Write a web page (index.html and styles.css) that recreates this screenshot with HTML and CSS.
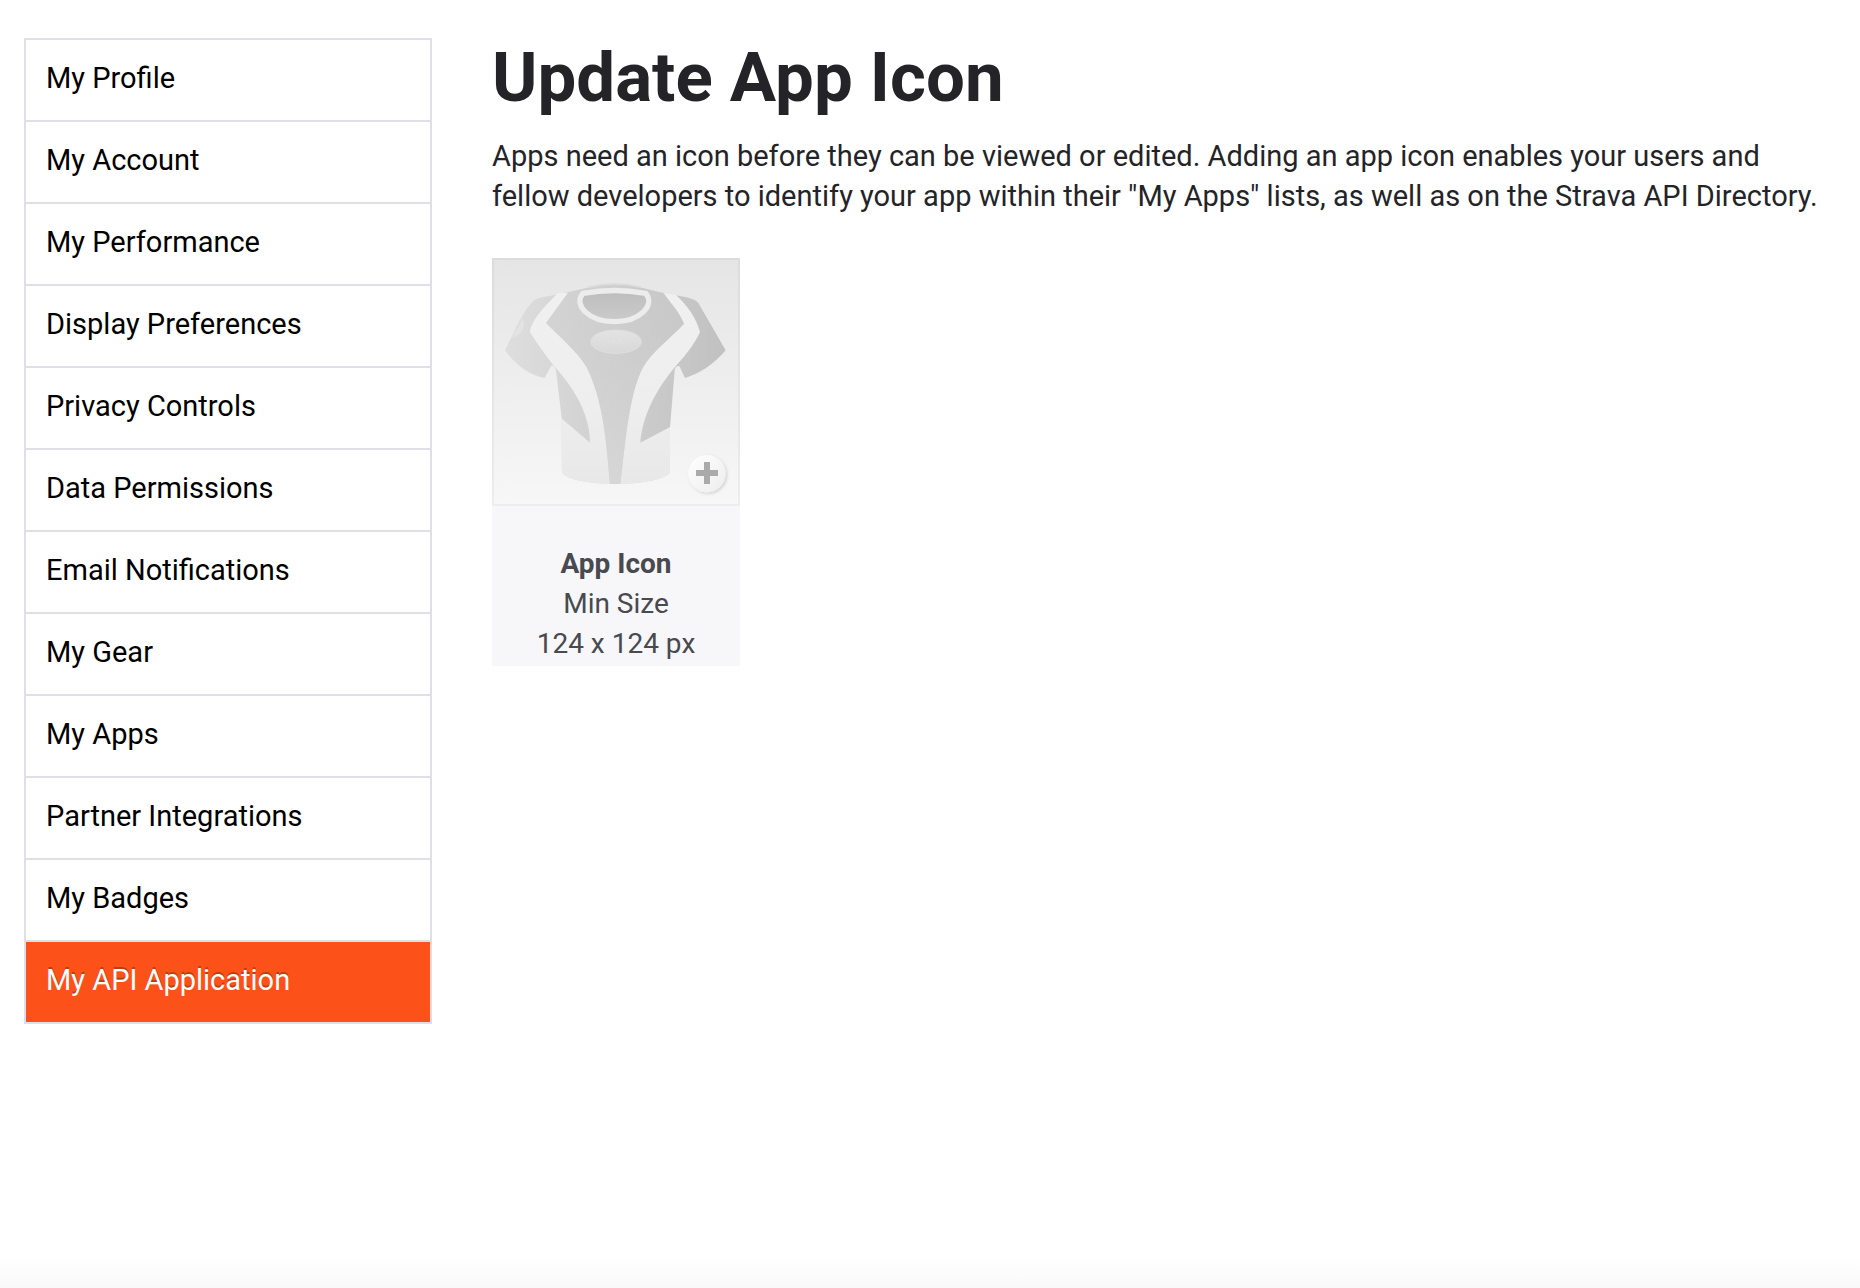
FILE: index.html
```html
<!DOCTYPE html>
<html lang="en">
<head>
<meta charset="utf-8">
<meta name="viewport" content="width=device-width, initial-scale=1">
<title>Update App Icon</title>
<link rel="stylesheet" href="styles.css">
</head>
<body>
<div class="page">
  <nav class="side-nav" aria-label="Settings">
    <ul class="side-list">
      <li><a href="#profile">My Profile</a></li>
      <li><a href="#account">My Account</a></li>
      <li><a href="#performance">My Performance</a></li>
      <li><a href="#display">Display Preferences</a></li>
      <li><a href="#privacy">Privacy Controls</a></li>
      <li><a href="#data">Data Permissions</a></li>
      <li><a href="#email">Email Notifications</a></li>
      <li><a href="#gear">My Gear</a></li>
      <li><a href="#apps">My Apps</a></li>
      <li><a href="#partners">Partner Integrations</a></li>
      <li><a href="#badges">My Badges</a></li>
      <li><a class="selected" href="#api" aria-current="page">My API Application</a></li>
    </ul>
  </nav>
  <main class="content">
    <h1>Update App Icon</h1>
    <p class="intro">Apps need an icon before they can be viewed or edited. Adding an app icon enables your users and<br>fellow developers to identify your app within their "My Apps" lists, as well as on the Strava API Directory.</p>
    <section class="icon-card">
      <button class="upload" type="button" aria-label="Add app icon">
        <svg class="jersey" viewBox="36 39 744 744" aria-hidden="true">
          <defs>
            <linearGradient id="bg" x1="0" y1="0" x2="0" y2="1"><stop offset="0" stop-color="#e5e5e5"/><stop offset="1" stop-color="#f7f7f7"/></linearGradient>
            <linearGradient id="cloth" gradientUnits="userSpaceOnUse" x1="75" y1="0" x2="737" y2="0"><stop offset="0" stop-color="#dedede"/><stop offset=".45" stop-color="#d0d0d0"/><stop offset="1" stop-color="#c1c1c1"/></linearGradient>
            <linearGradient id="hem" x1="0" y1="0" x2="0" y2="1"><stop offset="0" stop-color="#f0f0f0"/><stop offset=".6" stop-color="#eeeeee"/><stop offset="1" stop-color="#e8e8e8"/></linearGradient>
            <linearGradient id="panel" gradientUnits="userSpaceOnUse" x1="0" y1="130" x2="0" y2="717"><stop offset="0" stop-color="#c9c9c9" stop-opacity=".3"/><stop offset="1" stop-color="#dadada" stop-opacity=".7"/></linearGradient>
            <linearGradient id="neck" x1="0" y1="0" x2="0" y2="1"><stop offset="0" stop-color="#bdbdbd"/><stop offset="1" stop-color="#cbcbcb"/></linearGradient>
            <linearGradient id="badge" x1="0" y1="0" x2="0" y2="1"><stop offset="0" stop-color="#e3e3e3"/><stop offset="1" stop-color="#d8d8d8"/></linearGradient>
            <linearGradient id="knob" x1="0" y1="0" x2="1" y2="1"><stop offset="0" stop-color="#fff"/><stop offset="1" stop-color="#ededed"/></linearGradient>
            <filter id="shade" x="-20%" y="-20%" width="150%" height="150%"><feDropShadow dx="4" dy="4" stdDeviation="4" flood-color="#000" flood-opacity=".16"/></filter>
          </defs>
          <rect x="36" y="39" width="744" height="744" fill="url(#bg)"/>
          <rect x="39" y="42" width="738" height="738" fill="none" stroke="#000" stroke-opacity=".04" stroke-width="6"/>
          <path fill="url(#cloth)" d="M323 128Q405 108 485 128L553 145L603 154Q645 160 655 174L737 316Q684 378 615 399L598 363Q586 361 584 376L570 548V683Q542 713 405 717Q270 713 246 683L245 520L228 376Q222 357 213 363L194 399Q125 385 75 316C98 269 126 203 157 170Q171 158 205 154Z"/>
          <path fill="url(#hem)" d="M243 519L330 593C330 505 280 427 222 363Q180 309 149 260C158 219 198 181 233 145L264 143L198 234C237 274 290 318 319 365C371 468 379 594 390 717Q266 711 246 683Z"/>
          <path fill="url(#hem)" d="M570 546L481 593C488 504 536 423 590 360Q638 309 660 262C650 218 618 177 587 149L551 144C568 171 598 199 612 236C572 280 515 320 488 369C446 451 436 597 421 717Q548 711 570 683Z"/>
          <path fill="url(#panel)" d="M264 143L323 128H485L551 144C568 171 598 199 612 236C572 280 515 320 488 369C446 451 436 597 421 717H390C379 594 371 468 319 365C290 318 237 274 198 234Z"/>
          <path fill="#e3e3e3" d="M128 221Q137 246 122 263Q108 279 96 275Z"/>
          <path fill="url(#neck)" stroke="#ececec" stroke-width="16" stroke-linejoin="round" d="M309 145Q403 128 497 145C527 180 480 230 403 230S279 180 309 145Z"/>
          <path fill="none" stroke="#dcdcdc" stroke-width="5" d="M323 127Q405 106 485 127"/>
          <ellipse cx="408" cy="290" rx="76" ry="35" fill="url(#badge)" stroke="#dfdfdf" stroke-width="3"/>
          <g fill="none" stroke="#e4e4e4" stroke-width="3"><path d="M380 290h12M400 284v12M412 296l7-12l7 12"/></g>
          <circle cx="681" cy="686" r="56" fill="url(#knob)" filter="url(#shade)"/>
          <path fill="#aaa" d="M672 651h18v24h24v18h-24v24h-18v-24h-24v-18h24z"/>
        </svg>
      </button>
      <div class="caption">
        <strong>App Icon</strong>
        <span>Min Size</span>
        <span>124 x 124 px</span>
      </div>
    </section>
  </main>
</div>
<div class="page-fade"></div>
</body>
</html>
```
FILE: styles.css
```css
* { box-sizing: border-box; }

body {
  margin: 0;
  min-height: 100vh;
  display: flex;
  flex-direction: column;
  background: #fff;
  color: #242428;
  font-family: Roboto, "Liberation Sans", sans-serif;
  font-size: 29px;
  line-height: 40px;
}

.page {
  flex: 1;
  display: flex;
  align-items: flex-start;
  gap: 60px;
  padding: 38px 24px 0;
}

.side-nav { flex: 0 0 408px; }

.side-list {
  margin: 0;
  padding: 0;
  list-style: none;
  border: 2px solid #dfdfe8;
}

.side-list li + li { border-top: 2px solid #dfdfe8; }

.side-list a {
  display: block;
  padding: 18px 20px 22px;
  color: #000;
  text-decoration: none;
}

.side-list .selected {
  background: #fc5219;
  color: #fff;
  text-shadow: 0 -2px 0 rgba(0, 0, 0, 0.25);
}

.content { flex: 1; min-width: 0; }

h1 {
  margin: 0 0 18px;
  font-size: 69px;
  line-height: 80px;
  font-weight: 700;
}

.intro {
  margin: 0 0 42px;
}

.icon-card {
  width: 248px;
  background: #f7f7fa;
  color: #494950;
}

.upload {
  display: block;
  width: 100%;
  padding: 0;
  border: 0;
  background: none;
  cursor: pointer;
}

.jersey { display: block; width: 100%; }

.caption {
  display: flex;
  flex-direction: column;
  padding: 38px 0 2px;
  font-size: 28px;
  text-align: center;
}

.page-fade {
  height: 32px;
  background: linear-gradient(#fff, #f9f9f9);
}
```
